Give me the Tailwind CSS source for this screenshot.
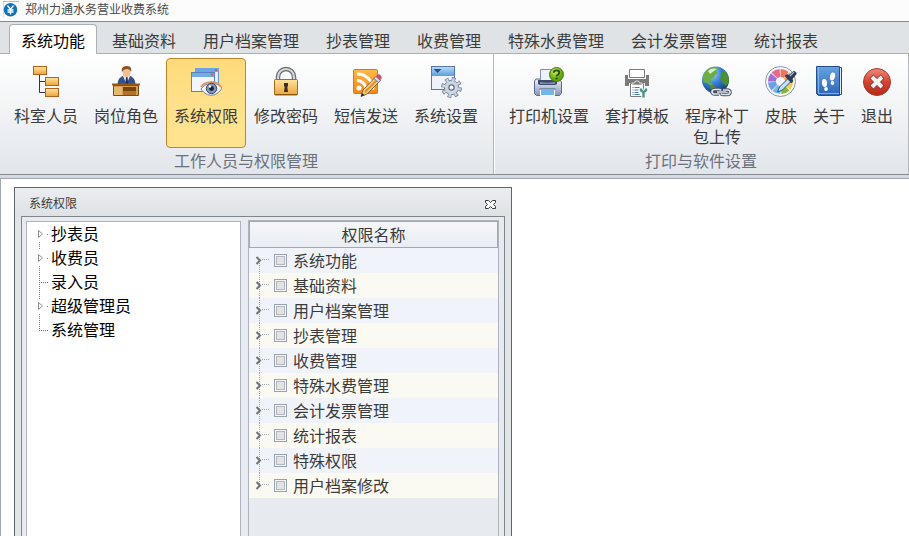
<!DOCTYPE html>
<html lang="zh-CN">
  <head>
    <meta charset="UTF-8" />
    <meta name="viewport" content="width=device-width, initial-scale=1.0" />
    <title>郑州力通水务营业收费系统</title>
    <script src="https://cdn.jsdelivr.net/npm/@tailwindcss/browser@4"></script>
  </head>
  <body class="flex h-screen flex-col overflow-hidden bg-white font-['Noto_Sans_CJK_SC',sans-serif] text-base text-[#3b3b3b]">
    <!-- title bar -->
    <header class="flex h-[22px] shrink-0 items-center gap-1.5 border-b border-[#868b91] bg-[#fcfcfc] pb-1 pl-[3px]">
      <svg class="size-4" viewBox="0 0 16 16">
        <path d="M0 16V.5h16" fill="none" stroke="#b9b9b9" />
        <circle cx="7.5" cy="8.700" r="6.800" fill="#1272b6" />
        <path d="M4.500 4.500l3 4 3-4M7.500 8.500v5M4.500 9h6M4.500 11h6" fill="none" stroke="#fff" stroke-width="1.300" />
      </svg>
      <h1 class="text-xs text-[#4a4a4a]">郑州力通水务营业收费系统</h1>
    </header>

    <!-- ribbon tabs -->
    <nav class="flex h-8 shrink-0 items-end gap-[3px] border-b border-[#abb0b6] bg-[#dfe3e5] pl-[9px] leading-6 whitespace-nowrap">
      <a href="#" class="-mb-px h-[30px] rounded-t border border-b-0 border-[#abb0b6] bg-white px-[11px] pt-[3px] text-black">系统功能</a>
      <a href="#" class="h-[29px] px-3 pt-1">基础资料</a>
      <a href="#" class="h-[29px] px-3 pt-1">用户档案管理</a>
      <a href="#" class="h-[29px] px-3 pt-1">抄表管理</a>
      <a href="#" class="h-[29px] px-3 pt-1">收费管理</a>
      <a href="#" class="h-[29px] px-3 pt-1">特殊水费管理</a>
      <a href="#" class="h-[29px] px-3 pt-1">会计发票管理</a>
      <a href="#" class="h-[29px] px-3 pt-1">统计报表</a>
    </nav>

    <!-- ribbon -->
    <div class="flex h-[121px] shrink-0 border-b border-[#868b91] bg-linear-to-b from-white to-[#e2e6eb] leading-[21px]">
      <section class="flex flex-col border-r border-[#b4b9c0] pt-1 pr-[7px] pl-1.5">
        <div class="flex">
          <button class="flex h-[90px] w-20 flex-col items-center gap-[7px] pt-2">
            <svg class="size-8 shrink-0" viewBox="0 0 32 32">
              <defs>
                <linearGradient id="gold" x2="0" y2="1"><stop stop-color="#ffe3a0" /><stop offset="1" stop-color="#eda53a" /></linearGradient>
              </defs>
              <path d="M9.5 9v17.5H15M9.5 15.500H15" fill="none" stroke="#2c3352" />
              <g fill="url(#gold)" stroke="#b4611d">
                <rect x="3.500" y=".5" width="13" height="8" />
                <rect x="15.500" y="11.500" width="13" height="8" />
                <rect x="15.500" y="22.500" width="13" height="8" />
              </g>
            </svg>
            科室人员
          </button>
          <button class="flex h-[90px] w-20 flex-col items-center gap-[7px] pt-2">
            <svg class="size-8 shrink-0" viewBox="0 0 32 32">
              <path d="M8 19c0-5 2-8 6-9h5c4 1 6 4 6 9z" fill="#34518f" stroke="#22335f" stroke-width=".8" />
              <path d="M13 10h7l-3.500 8z" fill="#f3f5fa" />
              <path d="M16 11h1.500l.8 7h-3z" fill="#1f2d5c" />
              <ellipse cx="16.500" cy="6" rx="4" ry="5.200" fill="#f0c094" />
              <path d="M12 6c-1-4 1-6 5-6 4 0 5 3 4 6-.5-2-2-3-4-3s-4 1-5 3z" fill="#8d5229" />
              <path d="M3.500 19.500h25v10h-25z" fill="#d39d52" stroke="#7d4a12" />
              <path d="M4 21h8v8H4z" fill="#e6b870" />
              <path d="M13 21h13v8H13z" fill="#7a430b" />
              <path d="M13 25h13v4H13z" fill="#b27223" />
              <path d="M2 18.500h28" stroke="#9a5512" stroke-width="2" />
            </svg>
            岗位角色
          </button>
          <button class="flex h-[90px] w-20 flex-col items-center gap-[7px] rounded-sm border border-[#c98228] bg-linear-to-b from-[#fddb7c] via-[#ffe18b] to-[#ffe48f] pt-[7px]">
            <svg class="size-8 shrink-0" viewBox="0 0 32 32">
              <rect x="5.500" y="2.500" width="23" height="15" fill="#e6eefb" stroke="#6792cf" />
              <path d="M5 2h24v4H5z" fill="#6ba5e2" />
              <path d="M25 3h2v2h-2z" fill="#e2563c" />
              <rect x="1.500" y="6.500" width="23" height="19" fill="#f2f5fc" stroke="#5c80be" />
              <path d="M2 7h22v4H2z" fill="#70ace8" />
              <path d="M21 7.500h2v2h-2z" fill="#e2563c" />
              <path d="M11 23c5-7 15-8 21-1-5 9-15 10-21 1z" fill="#f4f4f7" stroke="#7b7f94" />
              <path d="M11 21c4-6 15-7 20 0" fill="none" stroke="#d99467" stroke-width="2" />
              <circle cx="21.500" cy="22.500" r="5.200" fill="#8195b4" stroke="#374768" />
              <circle cx="21.500" cy="22.500" r="2.400" fill="#152038" />
              <circle cx="20" cy="20.500" r="1.200" fill="#fff" />
            </svg>
            系统权限
          </button>
          <button class="flex h-[90px] w-20 flex-col items-center gap-[7px] pt-2">
            <svg class="size-8 shrink-0" viewBox="0 0 32 32">
              <path d="M8 15v-4a8 8 0 0 1 16 0v4" fill="none" stroke="#666b73" stroke-width="4.500" />
              <path d="M8 15v-4a8 8 0 0 1 16 0v4" fill="none" stroke="#d3d6da" stroke-width="2.200" />
              <rect x="4.500" y="13.500" width="23" height="15.500" rx="1" fill="url(#gold)" stroke="#a66a18" />
              <path d="M5 28.500h22" stroke="#8d570f" />
              <path d="M14 17h4v3l-.7 1 .7 5h-4l.7-5-.7-1z" fill="#3a3027" />
            </svg>
            修改密码
          </button>
          <button class="flex h-[90px] w-20 flex-col items-center gap-[7px] pt-2">
            <svg class="size-8 shrink-0" viewBox="0 0 32 32">
              <defs>
                <linearGradient id="rss" x2="0" y2="1"><stop stop-color="#ffb84a" /><stop offset="1" stop-color="#f18715" /></linearGradient>
              </defs>
              <rect x="3.500" y="3.500" width="24" height="24" rx="1" fill="url(#rss)" stroke="#d5781a" />
              <circle cx="9" cy="22" r="2.500" fill="#fff" />
              <path d="M7 14.500a9 9 0 0 1 9 9M7 8a15.500 15.500 0 0 1 16 15.500" fill="none" stroke="#fff" stroke-width="3" />
              <path d="M11 30.500l2-6.500L26 10.500l4.500 4L17 28z" fill="#f3c66c" stroke="#70502c" stroke-width=".8" />
              <path d="M15 26l13-13" stroke="#d7822a" stroke-width="1.500" />
              <path d="M24 12.500l2-2 4.500 4-2 2z" fill="#d4dcec" stroke="#546789" stroke-width=".7" />
              <path d="M26 10.500l1.500-2c2-1 5 2 4 4l-1.500 2z" fill="#c9506c" />
              <path d="M11 30.500l1-3.500 2.500 2.300z" fill="#223" />
            </svg>
            短信发送
          </button>
          <button class="flex h-[90px] w-20 flex-col items-center gap-[7px] pt-2">
            <svg class="size-8 shrink-0" viewBox="0 0 32 32">
              <defs>
                <linearGradient id="head" x2="0" y2="1"><stop stop-color="#b5dbf7" /><stop offset="1" stop-color="#5c9cd9" /></linearGradient>
              </defs>
              <rect x="1.500" y=".5" width="23" height="23" fill="#eef2fb" stroke="#5876a8" />
              <path d="M2 1h22v9H2z" fill="url(#head)" />
              <path d="M3.500 3h8l-4 4z" fill="#23509a" />
              <circle cx="21.500" cy="21.500" r="8.300" fill="none" stroke="#75829b" stroke-width="4.200" stroke-dasharray="3.600 2.920" />
              <circle cx="21.500" cy="21.500" r="7.200" fill="#cdd5e1" stroke="#75829b" />
              <circle cx="21.500" cy="21.500" r="8" fill="none" stroke="#cdd5e1" stroke-width="3" stroke-dasharray="2.200 4.083" stroke-dashoffset="-.6" />
              <circle cx="21.500" cy="21.500" r="2.600" fill="#f7f9fc" stroke="#66748e" stroke-width="1.300" />
            </svg>
            系统设置
          </button>
        </div>
        <h2 class="h-[26px] text-center leading-6 text-[#6b717d]">工作人员与权限管理</h2>
      </section>

      <section class="flex flex-col border-x border-l-white border-r-[#b4b9c0] pt-1 pr-[7px] pl-1.5">
        <div class="flex">
          <button class="flex h-[90px] w-24 flex-col items-center gap-[7px] pt-2">
            <svg class="size-8 shrink-0" viewBox="0 0 32 32">
              <defs>
                <linearGradient id="print" x2="0" y2="1"><stop stop-color="#eef2f9" /><stop offset="1" stop-color="#8795b6" /></linearGradient>
                <radialGradient id="lime" cx=".4" cy=".3"><stop stop-color="#d3ef64" /><stop offset="1" stop-color="#64a80d" /></radialGradient>
              </defs>
              <path d="M3 13h23l2.500 3v11l-2 2.500H3.500l-2-2V15z" fill="url(#print)" stroke="#5c6c92" />
              <path d="M7.500 15V3.500H21V15z" fill="#eef2fc" stroke="#8391b3" />
              <path d="M5 14h19v4l-2 1H7l-2-1z" fill="#3e4a6c" />
              <path d="M7 16c5 1 10 1 15 0v2H7z" fill="#8090b4" />
              <path d="M7.500 23.500h14v6h-14z" fill="#70b5eb" stroke="#fff" />
              <path d="M6.500 23h16" stroke="#46557b" />
              <circle cx="23.500" cy="8.500" r="7" fill="url(#lime)" stroke="#447911" />
              <path d="M20.800 6.800c0-3.200 5.500-3.200 5.500 0 0 2-2.700 1.700-2.700 3.500" fill="none" stroke="#27500b" stroke-width="1.800" />
              <circle cx="23.600" cy="12.500" r="1.100" fill="#27500b" />
            </svg>
            打印机设置
          </button>
          <button class="flex h-[90px] w-20 flex-col items-center gap-[7px] pt-2">
            <svg class="size-8 shrink-0" viewBox="0 0 32 32">
              <path d="M8.500 3.500h15v8h-15z" fill="#fff" stroke="#7b7b7b" />
              <path d="M4 9h3v4h18V9h3v11h-4v-3H8v3H4z" fill="#7b7b7b" />
              <path d="M9.500 17.500h13v13h-13z" fill="#fff" stroke="#7b7b7b" />
              <path d="M11 19v-2h2.500l1-2h3l1 2H21v2z" fill="#7b7b7b" stroke="#fff" stroke-width=".7" />
              <path d="M11.500 21.500h1m1 0h5m-7 2.500h1m1 0h4m-6 2.500h1m1 0h4m-6 2h1m1 0h5" stroke="#4779aa" />
              <path d="M22.500 25v6.500M20 22.500v2l2.500 1.800 2.500-1.800v-2" fill="none" stroke="#fff" stroke-width="4.500" />
              <path d="M22.500 25v6.500M20 22.500v2l2.500 1.800 2.500-1.800v-2" fill="none" stroke="#4a9483" stroke-width="2.400" />
            </svg>
            套打模板
          </button>
          <button class="flex h-[90px] w-20 flex-col items-center gap-[7px] pt-2">
            <svg class="size-8 shrink-0" viewBox="0 0 32 32">
              <defs>
                <radialGradient id="sea" cx=".35" cy=".25" r=".8"><stop stop-color="#b7e2ff" /><stop offset=".45" stop-color="#3b86dc" /><stop offset="1" stop-color="#113576" /></radialGradient>
              </defs>
              <circle cx="14.500" cy="14" r="13.500" fill="url(#sea)" />
              <path d="M4 6c3-4 6-5 10-5l3 2-2 2 2 2-3 2-1 3-3 1-1 3 3 2-2 2-4-3-4-1c-1-4 0-7 2-10z" fill="#6cad45" />
              <path d="M20 5l4 0c3 3 4 7 4 11l-3 4-3-3-3-4 1-4z" fill="#4a9132" />
              <path d="M9 19l4 0 2 3-3 4c-2-1-3-4-3-7z" fill="#4a9132" />
              <path d="M7 5c3-3 6-3 9-2l-3 2-4 3z" fill="#d9efc9" />
              <g fill="none">
                <path d="M18 28h-4c-4 0-4-4.500 0-4.500h4c1.500 0 2 1 2 1M22 24h4c4 0 4 4.500 0 4.500h-4c-1.500 0-2-1-2-1M16 26h9" stroke="#4b5360" stroke-width="3.600" />
                <path d="M18 28h-4c-4 0-4-4.500 0-4.500h4c1.500 0 2 1 2 1M22 24h4c4 0 4 4.500 0 4.500h-4c-1.500 0-2-1-2-1M16 26h9" stroke="#dce1e8" stroke-width="1.700" />
              </g>
            </svg>
            程序补丁<br />包上传
          </button>
          <button class="flex h-[90px] w-12 flex-col items-center gap-[7px] pt-2">
            <svg class="size-8 shrink-0" viewBox="0 0 32 32">
              <circle cx="15.500" cy="15.500" r="15" fill="#f5f7fa" stroke="#8b98a8" />
              <g fill="none" stroke-width="8" transform="rotate(-90 15.500 15.500)">
                <circle cx="15.500" cy="15.500" r="8.600" stroke="#eb765f" pathLength="80" stroke-dasharray="9 71" />
                <circle cx="15.500" cy="15.500" r="8.600" stroke="#f4a35d" pathLength="80" stroke-dasharray="9 71" stroke-dashoffset="-10" />
                <circle cx="15.500" cy="15.500" r="8.600" stroke="#f1cf48" pathLength="80" stroke-dasharray="9 71" stroke-dashoffset="-20" />
                <circle cx="15.500" cy="15.500" r="8.600" stroke="#87b92f" pathLength="80" stroke-dasharray="9 71" stroke-dashoffset="-30" />
                <circle cx="15.500" cy="15.500" r="8.600" stroke="#75b8e1" pathLength="80" stroke-dasharray="9 71" stroke-dashoffset="-40" />
                <circle cx="15.500" cy="15.500" r="8.600" stroke="#6e9fe2" pathLength="80" stroke-dasharray="9 71" stroke-dashoffset="-50" />
                <circle cx="15.500" cy="15.500" r="8.600" stroke="#a36fce" pathLength="80" stroke-dasharray="9 71" stroke-dashoffset="-60" />
                <circle cx="15.500" cy="15.500" r="8.600" stroke="#e66b8b" pathLength="80" stroke-dasharray="9 71" stroke-dashoffset="-70" />
              </g>
              <path d="M12.500 26l2-5 9-9 3 3-9 9z" fill="#bfe0f8" stroke="#35507c" />
              <path d="M20 10l2-1.500 2 1 3.500-3.500c2-2 5 1 3 3L27 13l1 2-1.500 2z" fill="#2b3c5e" stroke="#1d2a45" stroke-width=".6" />
              <path d="M25 10l4-4" stroke="#9fb4d3" stroke-width="1.200" />
            </svg>
            皮肤
          </button>
          <button class="flex h-[90px] w-12 flex-col items-center gap-[7px] pt-2">
            <svg class="size-8 shrink-0" viewBox="0 0 32 32">
              <defs>
                <linearGradient id="book" x2="0" y2="1"><stop stop-color="#65a3e3" /><stop offset="1" stop-color="#2b65b5" /></linearGradient>
              </defs>
              <path d="M5.500 1.500h23v27h-23z" fill="#e8edf5" stroke="#1f4d8f" />
              <path d="M3.500.5h23v29h-21l-2-2z" fill="url(#book)" stroke="#224f92" />
              <path d="M5.500 1v26.500H26" fill="none" stroke="#8ebdec" stroke-width=".8" />
              <g fill="#fff">
                <ellipse cx="11.500" cy="17" rx="2.500" ry="4" transform="rotate(-6 11.500 17)" />
                <ellipse cx="13" cy="23" rx="1.800" ry="1.900" />
                <ellipse cx="19.500" cy="10.500" rx="2.500" ry="4" transform="rotate(14 19.500 10.500)" />
                <ellipse cx="19.500" cy="17" rx="1.800" ry="2" />
              </g>
            </svg>
            关于
          </button>
          <button class="flex h-[90px] w-12 flex-col items-center gap-[7px] pt-2">
            <svg class="size-8 shrink-0" viewBox="0 0 32 32">
              <defs>
                <linearGradient id="red" x2="0" y2="1"><stop stop-color="#ee8c7c" /><stop offset=".5" stop-color="#d5432f" /><stop offset="1" stop-color="#b52a1b" /></linearGradient>
              </defs>
              <circle cx="16" cy="16" r="13.500" fill="url(#red)" stroke="#a63a30" />
              <path d="M10.500 10.500l11 11m0-11l-11 11" stroke="#8e332b" stroke-width="5.500" />
              <path d="M11 11l10 10m0-10l-10 10" stroke="#f5f3f3" stroke-width="4" />
            </svg>
            退出
          </button>
        </div>
        <h2 class="h-[26px] text-center leading-6 text-[#6b717d]">打印与软件设置</h2>
      </section>
    </div>
    <div class="h-[3px] shrink-0 bg-[#d6dae0]"></div>

    <!-- work area -->
    <main class="flex min-h-0 flex-1 border-t border-l border-[#9fa7b4] pt-2 pl-[13px]">
      <div class="flex w-[498px] flex-col border border-b-0 border-[#60656c] bg-[#e2e5e8] px-1.5">
        <div class="-mx-1.5 flex h-7 shrink-0 items-center justify-between bg-linear-to-b from-[#ebedf0] to-[#dfe2e4] pt-1 pr-[15px] pl-3.5 text-xs">
          <h2 class="pb-0.5">系统权限</h2>
          <button aria-label="关闭">
            <svg class="h-[9px] w-[11px]" viewBox="0 0 11 9">
              <path d="M.5.5h3l2 2 2-2h3v2l-2 2 2 2v2h-3l-2-2-2 2h-3v-2l2-2-2-2z" fill="#fff" stroke="#34383e" />
            </svg>
          </button>
        </div>
        <div class="flex min-h-0 flex-1 gap-[7px] border border-b-0 border-[#7f858d] bg-[#e7ebef] pr-[5px] pl-1">
          <ul class="mt-1 w-[215px] border border-b-0 border-[#adb4bf] bg-white leading-[22px] text-black">
            <li class="flex h-6">
              <svg class="size-6" viewBox="0 0 24 24" fill="none"><path d="M11.500 8.500v7l4-3.500z" stroke="#8f8f8f" /><path d="M12.500 20v4M20 12.500h1" stroke="#777" stroke-dasharray="1" /></svg>
              抄表员
            </li>
            <li class="flex h-6">
              <svg class="size-6" viewBox="0 0 24 24" fill="none"><path d="M11.500 8.500v7l4-3.500z" stroke="#8f8f8f" /><path d="M12.500 0v4M12.500 20v4M20 12.500h1" stroke="#777" stroke-dasharray="1" /></svg>
              收费员
            </li>
            <li class="flex h-6">
              <svg class="size-6" viewBox="0 0 24 24" fill="none"><path d="M12.500 0v24M14 12.500h8" stroke="#777" stroke-dasharray="1" /></svg>
              录入员
            </li>
            <li class="flex h-6">
              <svg class="size-6" viewBox="0 0 24 24" fill="none"><path d="M11.500 8.500v7l4-3.500z" stroke="#8f8f8f" /><path d="M12.500 0v6M12.500 20v4M20 12.500h1" stroke="#777" stroke-dasharray="1" /></svg>
              超级管理员
            </li>
            <li class="flex h-6">
              <svg class="size-6" viewBox="0 0 24 24" fill="none"><path d="M12.500 0v12M12 12.500h10" stroke="#777" stroke-dasharray="1" /></svg>
              系统管理
            </li>
          </ul>
          <div class="mt-[3px] flex-1 border border-b-0 border-[#adb4bf]">
            <table class="w-full border-separate border-spacing-0">
              <thead>
                <tr>
                  <th class="h-[27px] border border-[#a3a9b4] bg-linear-to-b from-[#f6f7f9] to-[#e9edf3] p-0 leading-[25px] font-normal">权限名称</th>
                </tr>
              </thead>
              <tbody id="rights"></tbody>
            </table>
          </div>
        </div>
      </div>
    </main>

    <script>
      const rights = [
        "系统功能",
        "基础资料",
        "用户档案管理",
        "抄表管理",
        "收费管理",
        "特殊水费管理",
        "会计发票管理",
        "统计报表",
        "特殊权限",
        "用户档案修改",
      ];
      const last = rights.length - 1;
      document.getElementById("rights").innerHTML = rights
        .map((name, i) => {
          const line = i == 0 ? "M10.5 13v12" : i == last ? "M10.5 0v13" : "M10.5 0v25";
          return `
            <tr class="odd:bg-[#f0f4fa] even:bg-[#fbfaf2]">
              <td class="p-0">
                <div class="flex h-[25px] items-center leading-[22px]">
                  <svg class="h-[25px] w-[25px]" viewBox="0 0 25 25" fill="none">
                    <path d="${line}M13 11.5h8" stroke="#a0a5ae" stroke-dasharray="1" />
                    <path d="M7.5 9l3.500 3.500-3.500 3.500" stroke="#6d7480" stroke-width="2" />
                  </svg>
                  <input type="checkbox" id="right${i}" class="size-[13px] appearance-none border border-[#9aa2b0] bg-[#e3e3e3] shadow-[inset_0_0_0_1px_#f4f5f7,inset_0_0_0_2px_#b3b7be]" />
                  <label for="right${i}" class="pb-0.5 pl-1.5">${name}</label>
                </div>
              </td>
            </tr>`;
        })
        .join("");
    </script>
  </body>
</html>
